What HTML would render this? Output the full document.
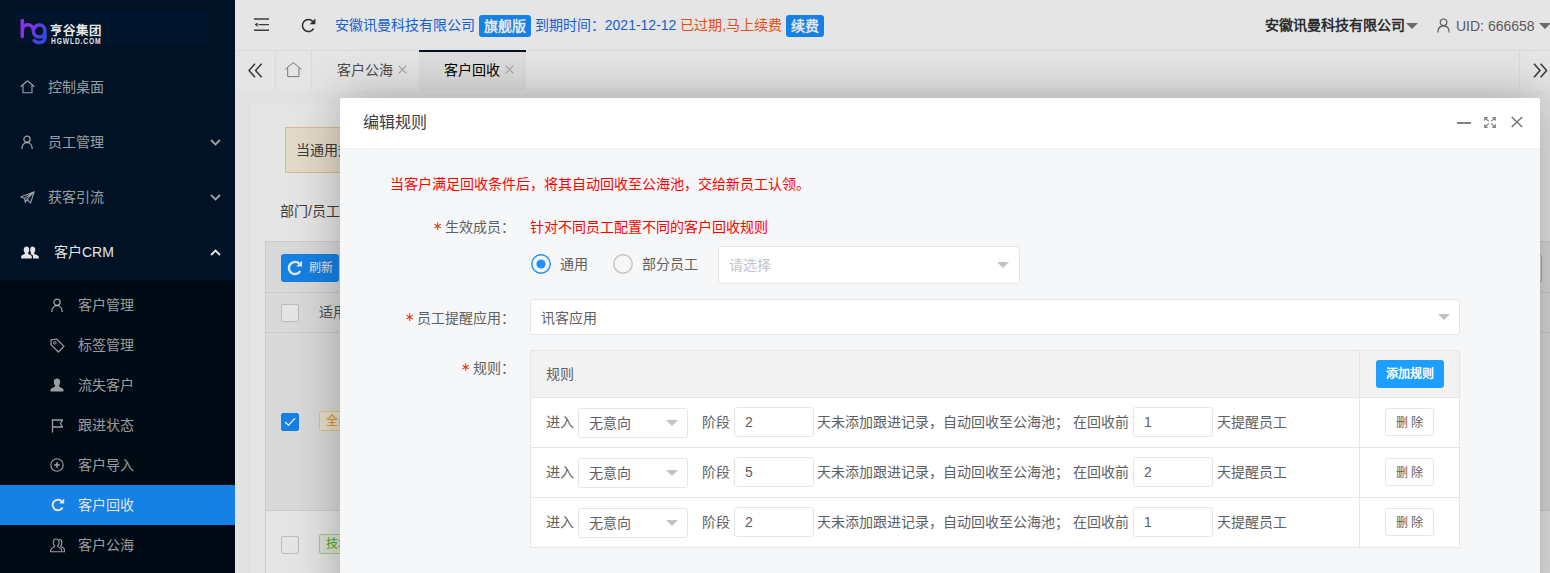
<!DOCTYPE html>
<html lang="zh-CN">
<head>
<meta charset="utf-8">
<title>客户回收</title>
<style>
*{box-sizing:border-box;margin:0;padding:0}
html,body{width:1550px;height:573px;overflow:hidden}
body{font-family:"Liberation Sans",sans-serif;font-size:14px;color:#333;background:#f7f7f7;position:relative}
.abs{position:absolute}
svg{display:block}
/* ---------- sidebar ---------- */
#side{position:absolute;left:0;top:0;width:235px;height:573px;background:#001529}
#logo{position:absolute;left:17px;top:11px;width:190px;height:33px;background:#001831}
#logo .cn{position:absolute;left:32.6px;top:12.6px;font-size:12.4px;line-height:14px;font-weight:bold;color:#fff;letter-spacing:1px;white-space:nowrap}
#logo .en{position:absolute;left:33.6px;top:26px;font-size:9px;line-height:8px;font-weight:bold;color:#fff;letter-spacing:1.2px;white-space:nowrap;transform:scaleX(.74);transform-origin:0 0}
.nav{position:absolute;left:0;width:235px;height:55px;color:rgba(255,255,255,.68);font-size:14px;line-height:55px}
.nav .ic{position:absolute;left:20px;top:20px}
.nav .tx{position:absolute;left:48px;top:0;white-space:nowrap}
.nav .ar{position:absolute;left:210px;top:24px}
.nav.on{color:#fff}
#sub{position:absolute;left:0;top:280px;width:235px;height:293px;background:#000c17}
.sn{position:absolute;left:0;width:235px;height:40px;line-height:40px;color:rgba(255,255,255,.68);font-size:14px}
.sn .ic{position:absolute;left:50px;top:13px}
.sn .tx{position:absolute;left:78px;top:0;white-space:nowrap}
.sn.on{background:#1890ff;color:#fff}
/* ---------- header ---------- */
#hd{position:absolute;left:235px;top:0;width:1315px;height:50px;background:#fff}
#hd .info{position:absolute;left:100px;top:0;height:50px;line-height:51px;font-size:14px;color:#1a69e6;white-space:nowrap}
.bdg{display:inline-block;height:22px;line-height:22px;padding:0 5px;background:#1890ff;color:#fff;border-radius:3px;font-weight:bold;vertical-align:middle;position:relative;top:0}
#hd .warn{color:#ff5722}
#hd .co{position:absolute;left:1030px;top:0;line-height:51px;font-weight:bold;color:#333;white-space:nowrap}
#hd .uid{position:absolute;left:1221px;top:0;line-height:53px;color:#666;white-space:nowrap}
.tri{position:absolute;width:0;height:0;border-left:6px solid transparent;border-right:6px solid transparent;border-top:6px solid #777}
/* ---------- tabs ---------- */
#tabs{position:absolute;left:235px;top:50px;width:1315px;height:40px;background:#fff;border-top:1px solid #f3f3f3;box-shadow:0 1px 2px 0 rgba(0,0,0,.1)}
#tabs .btn{position:absolute;top:-1px;height:40px;border-right:1px solid #f3f3f3}
#tabs .tab{position:absolute;top:-1px;height:40px;line-height:40px;font-size:14px;color:#555;white-space:nowrap}
#tabs .tab.on{background:#f6f6f6;color:#000;border-top:2px solid #001529;line-height:37px}
#tabs .x{display:inline-block;vertical-align:1px;margin-left:1px}
/* ---------- body ---------- */
#pg{position:absolute;left:235px;top:90px;width:1315px;height:483px;background:#fcfcfc}
#card{position:absolute;left:15px;top:15px;width:1300px;height:470px;background:#fff}
#alert{position:absolute;left:35px;top:22px;width:1000px;height:46px;background:#fdf3e0;border:1px solid #f5cf98;line-height:44px;padding-left:10px;color:#444}
#tb{position:absolute;left:15px;top:136px;width:1290px;height:340px;border:1px solid #e2e2e2}
#tb .bar{position:absolute;left:0;top:0;width:100%;height:51px;background:#f2f2f2;border-bottom:1px solid #e2e2e2}
#tb .th{position:absolute;left:0;top:51px;width:100%;height:40px;background:#f2f2f2;border-bottom:1px solid #e2e2e2}
#tb .r1{position:absolute;left:0;top:91px;width:100%;height:178px;background:#f2f2f2;border-bottom:1px solid #e2e2e2}
#tb .r2{position:absolute;left:0;top:269px;width:100%;height:80px;background:#fff}
.cb{position:absolute;width:18px;height:18px;border:1px solid #d2d2d2;border-radius:2px;background:#fff}
.cb.on{background:#1890ff;border-color:#1890ff}
.tag{position:absolute;height:20px;line-height:19px;padding:0 6px;font-size:12px;border-radius:2px;border:1px solid;white-space:nowrap}
#shade{position:absolute;left:0;top:0;width:1550px;height:573px;background:rgba(0,0,0,.1)}
/* ---------- modal ---------- */
#md{position:absolute;left:340px;top:98px;width:1200px;height:520px;background:#f5f7f9;border-radius:3px;box-shadow:1px 1px 50px rgba(0,0,0,.3);overflow:hidden}
#md .tt{position:absolute;left:0;top:0;width:100%;height:51px;background:#fff;border-bottom:1px solid #f0f0f0;line-height:50px;padding-left:22.5px;font-size:16px;color:#3c3c3c}
.red{color:#ff0000}
.lbl{position:absolute;width:190px;text-align:right;white-space:nowrap;color:#606060;line-height:20px}
.lbl .as{display:inline-block;margin-right:4px;vertical-align:1.5px}
.sel{position:absolute;background:#fff;border:1px solid #e6e6e6;border-radius:3px}
.sel .t{position:absolute;left:10px;top:0;white-space:nowrap}
.sel .a{position:absolute;width:0;height:0;border-left:6px solid transparent;border-right:6px solid transparent;border-top:6px solid #c2c2c2}
#rt{position:absolute;left:190px;top:252px;width:930px;height:198px;background:#fff;border:1px solid #e6e6e6}
#rt .h{position:absolute;left:0;top:0;width:928px;height:46px;background:#f2f2f2}
#rt .hl{position:absolute;left:0;width:928px;height:1px;background:#e6e6e6}
#rt .vl{position:absolute;left:828px;top:0;width:1px;height:196px;background:#e6e6e6}
.row{position:absolute;left:0;width:928px;height:49px;line-height:49px;color:#606060;white-space:nowrap}
.row span{position:absolute;top:0}
.row .in{position:absolute;top:9px;width:80px;height:30px;border:1px solid #e6e6e6;border-radius:3px;background:#fff;line-height:28px;padding-left:10px;color:#606060}
.row .sl{position:absolute;top:10px;left:47px;width:110px;height:30px;border:1px solid #e6e6e6;border-radius:3px;background:#fff;line-height:29px;padding-left:10px;color:#606060}
.row .sl b{position:absolute;right:9px;top:11px;width:0;height:0;border-left:6px solid transparent;border-right:6px solid transparent;border-top:6px solid #c2c2c2}
.row .del{position:absolute;left:854px;top:10px;width:49px;height:28px;border:1px solid #e6e6e6;border-radius:3px;background:#fff;font-size:12px;line-height:28px;text-align:center;color:#606060}
.add{position:absolute;left:845px;top:9px;width:68px;height:28px;border-radius:3px;background:#1e9fff;color:#fff;font-size:12px;font-weight:bold;line-height:28px;text-align:center}
</style>
</head>
<body>
<!-- SIDEBAR -->
<div id="side">
  <div id="logo">
    <svg class="abs" style="left:3px;top:7.7px" width="28" height="27" viewBox="0 0 28 27">
      <defs><linearGradient id="lg" x1="0" y1="0" x2="1" y2="0.6"><stop offset="0" stop-color="#a531ff"/><stop offset=".45" stop-color="#8a3cff"/><stop offset="1" stop-color="#3d52f5"/></linearGradient></defs>
      <path d="M2.3 1.5 V17.5 M2.3 11 C2.3 6.5 5.5 5.8 7.8 5.8 C11.5 5.8 13.3 8.5 13.3 11.5 C13.3 15.5 16 18 19.5 18 C23 18 25 15.3 25 12 C25 8.6 22.8 6 19.5 6 C17 6 15.2 7.4 14.5 9 M25 12 V18 C25 21.6 22.5 23.6 19.3 23.6 C17 23.6 15.3 22.8 14.3 21.6" fill="none" stroke="url(#lg)" stroke-width="3.5" stroke-linecap="round" stroke-linejoin="round"/>
    </svg>
    <div class="cn">亨谷集团</div>
    <div class="en">HGWLD.COM</div>
  </div>

  <div class="nav" style="top:60px">
    <svg class="ic" style="left:19.6px;top:19.6px" width="15" height="14" viewBox="0 0 15 14"><path d="M.6 6.7 L7.5 .8 L14.4 6.7 M3 5.4 V12.7 H12 V5.4" fill="none" stroke="currentColor" stroke-width="1.15" stroke-linejoin="round"/></svg>
    <span class="tx">控制桌面</span>
  </div>
  <div class="nav" style="top:115px">
    <svg class="ic" style="left:21px" width="12" height="15" viewBox="0 0 12 15"><circle cx="6" cy="4.3" r="3.1" fill="none" stroke="currentColor" stroke-width="1.3"/><path d="M.8 14 C.8 10 3 7.6 6 7.6 C9 7.6 11.2 10 11.2 14" fill="none" stroke="currentColor" stroke-width="1.3"/></svg>
    <span class="tx">员工管理</span>
    <svg class="ar" width="11" height="7" viewBox="0 0 11 7"><path d="M1 1 L5.5 5.5 L10 1" fill="none" stroke="currentColor" stroke-width="1.8"/></svg>
  </div>
  <div class="nav" style="top:170px">
    <svg class="ic" style="top:21px" width="15" height="13" viewBox="0 0 15 13"><path d="M.8 6 L14.2 .8 L10.5 12 L7 8.2 L5.2 11.5 L4.6 7.4 Z M4.6 7.4 L14.2 .8 L7 8.2" fill="none" stroke="currentColor" stroke-width="1.1" stroke-linejoin="round"/></svg>
    <span class="tx">获客引流</span>
    <svg class="ar" width="11" height="7" viewBox="0 0 11 7"><path d="M1 1 L5.5 5.5 L10 1" fill="none" stroke="currentColor" stroke-width="1.8"/></svg>
  </div>
  <div class="nav on" style="top:225px">
    <svg class="ic" style="left:21px;top:21px" width="18" height="13" viewBox="0 0 18 13"><path d="M5.5 .5 C7.3 .5 8.3 1.9 8.3 3.8 C8.3 5.2 7.8 6.2 7 6.9 C7 7.6 7.5 8 8.6 8.5 C10 9.1 10.8 9.6 10.8 11 V12.5 H.2 V11 C.2 9.6 1 9.1 2.4 8.5 C3.5 8 4 7.6 4 6.9 C3.2 6.2 2.7 5.2 2.7 3.8 C2.7 1.9 3.7 .5 5.5 .5 Z" fill="currentColor"/><path d="M11.5 .5 C13.3 .5 14.3 1.9 14.3 3.8 C14.3 5.2 13.8 6.2 13 6.9 C13 7.6 13.5 8 14.6 8.5 C16 9.1 17.8 9.6 17.8 11 V12.5 H12 V10.8 C12 9.3 11 8.5 9.6 7.9 C10 7.6 10 7.3 10 6.9 C9.5 6.3 9.2 5.2 9.2 3.8 C9.2 1.9 9.9 .5 11.5 .5 Z" fill="currentColor"/></svg>
    <span class="tx" style="left:54px">客户CRM</span>
    <svg class="ar" width="11" height="7" viewBox="0 0 11 7"><path d="M1 6 L5.5 1.5 L10 6" fill="none" stroke="currentColor" stroke-width="1.8"/></svg>
  </div>

  <div id="sub">
    <div class="sn" style="top:5px">
      <svg class="ic" style="left:51px" width="12" height="15" viewBox="0 0 12 15"><circle cx="6" cy="4.3" r="3.1" fill="none" stroke="currentColor" stroke-width="1.3"/><path d="M.8 14 C.8 10 3 7.6 6 7.6 C9 7.6 11.2 10 11.2 14" fill="none" stroke="currentColor" stroke-width="1.3"/></svg>
      <span class="tx">客户管理</span></div>
    <div class="sn" style="top:45px">
      <svg class="ic" width="15" height="15" viewBox="0 0 15 15"><path d="M1 1.8 L6.6 1 L14 8.4 L8.4 14 L1 6.6 Z" fill="none" stroke="currentColor" stroke-width="1.2" stroke-linejoin="round"/><circle cx="4.8" cy="4.8" r="1.3" fill="none" stroke="currentColor" stroke-width="1"/></svg>
      <span class="tx">标签管理</span></div>
    <div class="sn" style="top:85px">
      <svg class="ic" width="14" height="14" viewBox="0 0 14 14"><path d="M7 .5 C9 .5 10.2 2 10.2 4 C10.2 5.6 9.6 6.8 8.7 7.5 C8.7 8.4 9.3 8.9 10.6 9.4 C12.3 10.1 13.5 10.7 13.5 12.3 V13.5 H.5 V12.3 C.5 10.7 1.7 10.1 3.4 9.4 C4.7 8.9 5.3 8.4 5.3 7.5 C4.4 6.8 3.8 5.6 3.8 4 C3.8 2 5 .5 7 .5 Z" fill="currentColor"/></svg>
      <span class="tx">流失客户</span></div>
    <div class="sn" style="top:125px">
      <svg class="ic" style="left:51px" width="13" height="15" viewBox="0 0 13 15"><path d="M1.5 1 V14.5 M1.5 2 H11.5 L9.5 5.5 L11.5 9 H1.5" fill="none" stroke="currentColor" stroke-width="1.3" stroke-linejoin="round"/></svg>
      <span class="tx">跟进状态</span></div>
    <div class="sn" style="top:165px">
      <svg class="ic" width="14" height="14" viewBox="0 0 14 14"><circle cx="7" cy="7" r="6.2" fill="none" stroke="currentColor" stroke-width="1.1"/><path d="M7 4.2 V9.8 M4.2 7 H9.8" stroke="currentColor" stroke-width="1.6" fill="none"/></svg>
      <span class="tx">客户导入</span></div>
    <div class="sn on" style="top:205px">
      <svg class="ic" style="left:51px" width="14" height="14" viewBox="0 0 14 14"><path d="M11.6 9.6 A5.3 5.3 0 1 1 10.7 3.2" fill="none" stroke="currentColor" stroke-width="2"/><path d="M8 5.6 H13.2 V.4 Z" fill="currentColor"/></svg>
      <span class="tx">客户回收</span></div>
    <div class="sn" style="top:245px">
      <svg class="ic" width="15" height="15" viewBox="0 0 15 15"><path d="M5.8 1 C7.8 1 9 2.5 9 4.5 C9 6 8.4 7.2 7.5 7.8 C7.6 8.6 8.2 9 9.4 9.5 C10.9 10.2 11.8 10.8 11.8 12.4 V13.8 H.6 V12.4 C.6 10.8 1.4 10.2 3 9.5 C4.2 9 4.8 8.6 4.8 7.8 C3.9 7.2 3.3 6 3.3 4.5 C3.3 2.5 4 1 5.8 1 Z" fill="none" stroke="currentColor" stroke-width="1.1"/><path d="M9.2 1.4 C11 1.6 11.8 3 11.8 4.8 C11.8 6.2 11.3 7.2 10.6 7.8 C10.7 8.5 11.3 8.8 12.4 9.3 C13.6 9.9 14.4 10.5 14.4 11.8 V13.8 H12.8" fill="none" stroke="currentColor" stroke-width="1.1"/></svg>
      <span class="tx">客户公海</span></div>
  </div>
</div>

<!-- HEADER -->
<div id="hd">
  <svg class="abs" style="left:19.4px;top:18px" width="15" height="13" viewBox="0 0 15 13"><path d="M0 .9 H15 M4.6 6.6 H15 M0 12.3 H15" stroke="#444" stroke-width="1.45" fill="none"/><path d="M3.6 4.5 V8.7 L.5 6.6 Z" fill="#444"/></svg>
  <svg class="abs" style="left:65.6px;top:17.6px" width="15" height="15" viewBox="0 0 15 15"><path d="M12.6 10.6 A6 6 0 1 1 11.8 3.4" fill="none" stroke="#333" stroke-width="1.55"/><path d="M8.6 6.2 H14.4 V.4 Z" fill="#333"/></svg>
  <div class="info">安徽讯曼科技有限公司 <span class="bdg">旗舰版</span> 到期时间：2021-12-12 <span class="warn">已过期,马上续费</span> <span class="bdg">续费</span></div>
  <div class="co">安徽讯曼科技有限公司</div>
  <div class="tri" style="left:1171px;top:23px"></div>
  <svg class="abs" style="left:1202px;top:18px" width="13" height="15" viewBox="0 0 13 15"><circle cx="6.5" cy="4.3" r="3.3" fill="none" stroke="#666" stroke-width="1.2"/><path d="M.8 14.5 C.8 10.2 3.2 7.8 6.5 7.8 C9.8 7.8 12.2 10.2 12.2 14.5" fill="none" stroke="#666" stroke-width="1.2"/></svg>
  <div class="uid">UID: 666658</div>
  <div class="tri" style="left:1304px;top:23px"></div>
</div>

<!-- TABS -->
<div id="tabs">
  <div class="btn" style="left:0;width:41px">
    <svg class="abs" style="left:13.3px;top:12.6px" width="15" height="15" viewBox="0 0 15 15"><path d="M7 .8 L1 7.5 L7 14.2 M13.6 .8 L7.6 7.5 L13.6 14.2" fill="none" stroke="#404040" stroke-width="1.55"/></svg>
  </div>
  <div class="btn" style="left:41px;width:36px">
    <svg class="abs" style="left:8.7px;top:12px" width="17" height="16" viewBox="0 0 17 16"><path d="M.3 7.3 L8.3 .5 L16.3 7.3 M2.7 6 V14.6 H13.9 V6" fill="none" stroke="#858585" stroke-width="1" stroke-linejoin="round"/></svg>
  </div>
  <div class="tab" style="left:102px">客户公海 <svg class="x" width="9" height="9" viewBox="0 0 9 9"><path d="M.7 .7 L8.3 8.3 M8.3 .7 L.7 8.3" stroke="#b4b4b4" stroke-width="1.1" fill="none"/></svg></div>
  <div class="tab on" style="left:184px;width:107px;padding-left:25px">客户回收 <svg class="x" width="9" height="9" viewBox="0 0 9 9"><path d="M.7 .7 L8.3 8.3 M8.3 .7 L.7 8.3" stroke="#b4b4b4" stroke-width="1.1" fill="none"/></svg></div>
  <div class="btn" style="left:1284px;width:40px;border-right:0;border-left:1px solid #f3f3f3">
    <svg class="abs" style="left:13px;top:12.6px" width="15" height="15" viewBox="0 0 15 15"><path d="M1 .8 L7 7.5 L1 14.2 M7.6 .8 L13.6 7.5 L7.6 14.2" fill="none" stroke="#404040" stroke-width="1.55"/></svg>
  </div>
</div>

<!-- PAGE BODY -->
<div id="pg">
  <div id="card">
    <div id="alert">当通用规则</div>
    <div class="abs" style="left:30px;top:96px;line-height:20px;color:#444;white-space:nowrap">部门/员工：</div>
    <div id="tb">
      <div class="bar">
        <div class="abs" style="left:15px;top:12px;width:58px;height:28px;border-radius:3px;background:#1890ff;color:#fff;font-size:12px;line-height:28px;padding-left:28px;white-space:nowrap">刷新
          <svg class="abs" style="left:6px;top:6px" width="16" height="16" viewBox="0 0 14 14"><path d="M11.6 9.6 A5.3 5.3 0 1 1 10.7 3.2" fill="none" stroke="#fff" stroke-width="2.1"/><path d="M8 5.6 H13.2 V.4 Z" fill="#fff"/></svg>
        </div>
        <div class="abs" style="left:1246px;top:13px;width:30px;height:27px;border:1px solid #bbb;border-radius:2px"></div>
      </div>
      <div class="th">
        <div class="cb" style="left:15px;top:11px"></div>
        <div class="abs" style="left:53px;top:0;line-height:39px;color:#555">适用</div>
      </div>
      <div class="r1">
        <div class="cb on" style="left:15px;top:80px"><svg class="abs" style="left:2px;top:3px" width="12" height="10" viewBox="0 0 12 10"><path d="M1 5 L4.5 8.3 L11 1.3" fill="none" stroke="#fff" stroke-width="1.3"/></svg></div>
        <div class="tag" style="left:53px;top:78px;background:#fff8e4;border-color:#ffdb87;color:#f5a000">全员</div>
      </div>
      <div class="r2">
        <div class="cb" style="left:15px;top:25px"></div>
        <div class="tag" style="left:53px;top:23px;background:#f3f9ec;border-color:#b0e88e;color:#58b810">技术</div>
      </div>
    </div>
  </div>
</div>

<div id="shade"></div>

<!-- MODAL -->
<div id="md">
  <div class="tt">编辑规则</div>
  <svg class="abs" style="left:1116px;top:17px" width="68" height="16" viewBox="0 0 68 16">
    <path d="M1 8 H15" stroke="#828282" stroke-width="2"/>
    <g fill="#858585" stroke="none"><path d="M28.1 2 H32.3 L28.1 6.2 Z M39.9 2 H35.7 L39.9 6.2 Z M28.1 12.9 H32.3 L28.1 8.7 Z M39.9 12.9 H35.7 L39.9 8.7 Z"/></g>
    <g fill="none" stroke="#858585" stroke-width="1.2"><path d="M29.3 3.2 L32.9 6.4 M38.7 3.2 L35.1 6.4 M29.3 11.7 L32.9 8.4 M38.7 11.7 L35.1 8.4"/></g>
    <path d="M55.7 1.9 L66.2 12 M66.2 1.9 L55.7 12" stroke="#737373" stroke-width="1.45" fill="none"/>
  </svg>

  <div class="abs red" style="left:50px;top:76px;line-height:20px;white-space:nowrap">当客户满足回收条件后，将其自动回收至公海池，交给新员工认领。</div>

  <div class="lbl" style="left:-15px;top:119px"><svg class="as" width="7.4" height="8.3" viewBox="0 0 8 9"><path d="M4 .3 V8.7 M.5 2.5 L7.5 6.5 M.5 6.5 L7.5 2.5" stroke="#ee3a0e" stroke-width="1.15" fill="none"/></svg>生效成员：</div>
  <div class="abs red" style="left:190px;top:119px;line-height:20px;white-space:nowrap">针对不同员工配置不同的客户回收规则</div>

  <svg class="abs" style="left:190px;top:154.7px" width="22" height="22" viewBox="0 0 22 22"><circle cx="11" cy="11" r="9.2" fill="none" stroke="#1e90ff" stroke-width="1.4"/><circle cx="11" cy="11" r="4.6" fill="#1e90ff"/></svg>
  <div class="abs" style="left:220px;top:156px;line-height:20px;color:#606060">通用</div>
  <svg class="abs" style="left:271.8px;top:154.7px" width="22" height="22" viewBox="0 0 22 22"><circle cx="11" cy="11" r="9.2" fill="none" stroke="#c6c6c6" stroke-width="1.5"/></svg>
  <div class="abs" style="left:302px;top:156px;line-height:20px;color:#606060;white-space:nowrap">部分员工</div>
  <div class="sel" style="left:378px;top:148px;width:302px;height:38px"><span class="t" style="line-height:37px;color:#c4c4c4">请选择</span><b class="a" style="left:278px;top:15px"></b></div>

  <div class="lbl" style="left:-15px;top:210px"><svg class="as" width="7.4" height="8.3" viewBox="0 0 8 9"><path d="M4 .3 V8.7 M.5 2.5 L7.5 6.5 M.5 6.5 L7.5 2.5" stroke="#ee3a0e" stroke-width="1.15" fill="none"/></svg>员工提醒应用：</div>
  <div class="sel" style="left:190px;top:201px;width:930px;height:36px"><span class="t" style="line-height:37px;color:#606060">讯客应用</span><b class="a" style="left:907px;top:14px"></b></div>

  <div class="lbl" style="left:-15px;top:260px"><svg class="as" width="7.4" height="8.3" viewBox="0 0 8 9"><path d="M4 .3 V8.7 M.5 2.5 L7.5 6.5 M.5 6.5 L7.5 2.5" stroke="#ee3a0e" stroke-width="1.15" fill="none"/></svg>规则：</div>
  <div id="rt">
    <div class="h"></div>
    <div class="abs" style="left:15px;top:0;line-height:47px;color:#606060">规则</div>
    <div class="add">添加规则</div>
    <div class="hl" style="top:46px"></div>
    <div class="hl" style="top:96px"></div>
    <div class="hl" style="top:146px"></div>
    <div class="vl"></div>

    <div class="row" style="top:47px">
      <span style="left:15px">进入</span><div class="sl">无意向<b></b></div>
      <span style="left:171px">阶段</span><div class="in" style="left:203px">2</div>
      <span style="left:286px">天未添加跟进记录，自动回收至公海池； 在回收前</span><div class="in" style="left:602px">1</div>
      <span style="left:686px">天提醒员工</span>
      <div class="del">删 除</div>
    </div>
    <div class="row" style="top:97px">
      <span style="left:15px">进入</span><div class="sl">无意向<b></b></div>
      <span style="left:171px">阶段</span><div class="in" style="left:203px">5</div>
      <span style="left:286px">天未添加跟进记录，自动回收至公海池； 在回收前</span><div class="in" style="left:602px">2</div>
      <span style="left:686px">天提醒员工</span>
      <div class="del">删 除</div>
    </div>
    <div class="row" style="top:147px">
      <span style="left:15px">进入</span><div class="sl">无意向<b></b></div>
      <span style="left:171px">阶段</span><div class="in" style="left:203px">2</div>
      <span style="left:286px">天未添加跟进记录，自动回收至公海池； 在回收前</span><div class="in" style="left:602px">1</div>
      <span style="left:686px">天提醒员工</span>
      <div class="del">删 除</div>
    </div>
  </div>
</div>
</body>
</html>
